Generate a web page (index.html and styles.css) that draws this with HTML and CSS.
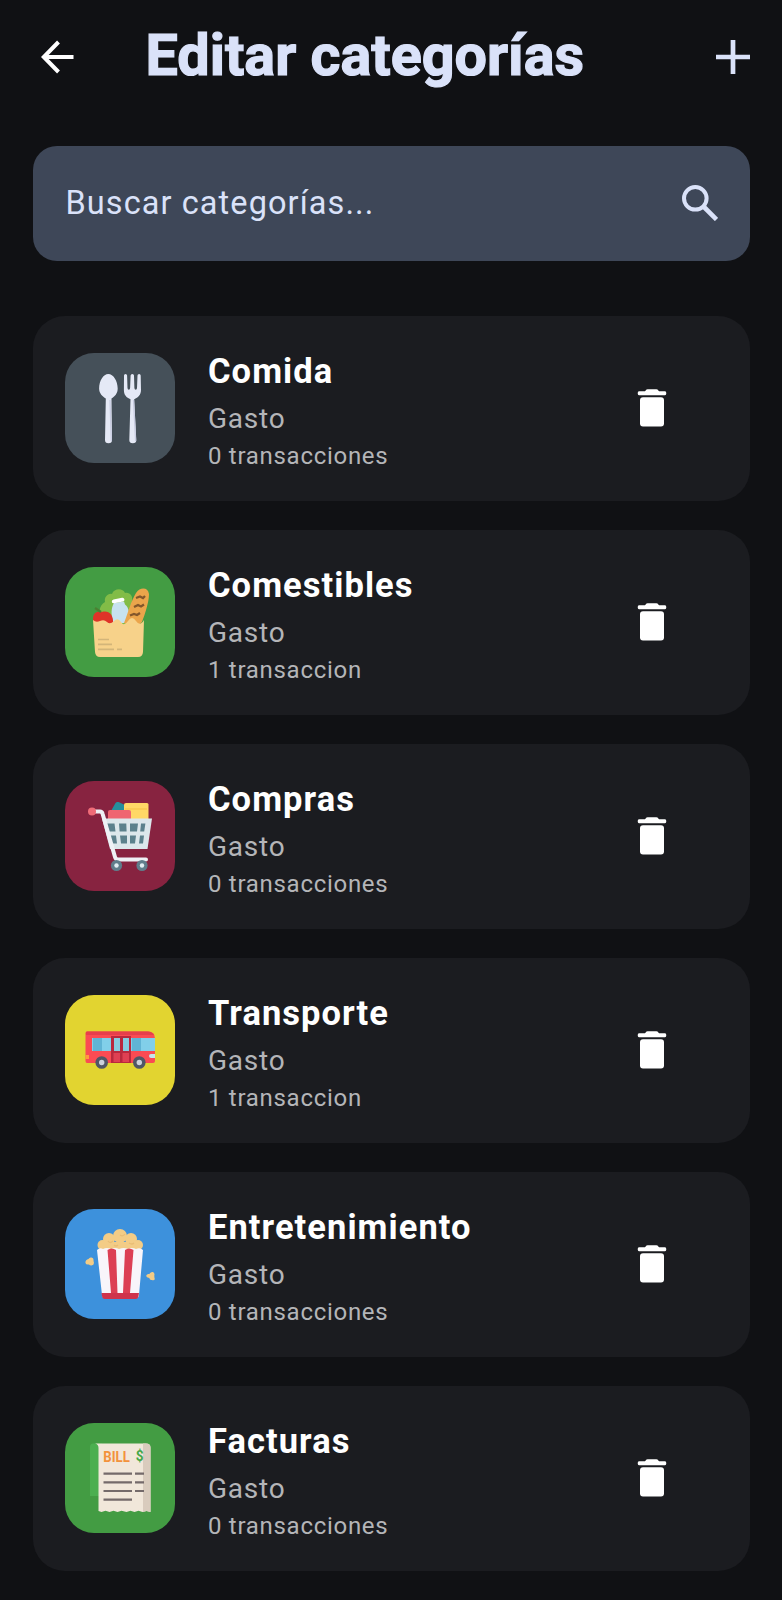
FILE: index.html
```html
<!DOCTYPE html>
<html lang="es">
<head>
<meta charset="utf-8">
<title>Editar categorías</title>
<link rel="stylesheet" href="styles.css">
</head>
<body>
<svg width="0" height="0" class="defs">
  <symbol id="trash" viewBox="0 0 30 38"><path fill="#fff" d="M2 2.300H8L9.500.6Q10 .2 10.700.2h8.600q.7 0 1.200.4L22 2.300h6q1.300 0 1.300 2t-1.300 2H2q-1.300 0-1.300-2t1.300-2ZM6 8.300H24q3 0 3 3V34.500q0 3-3 3H6q-3 0-3-3V11.300q0-3 3-3Z"/></symbol>
</svg>
<header class="topbar">
  <svg class="back" viewBox="0 0 34 34"><path d="M32.500 17H3M17.500 2 2.800 17 17.500 32" fill="none" stroke="#fff" stroke-width="4"/></svg>
  <h1 class="title">Editar categorías</h1>
  <svg class="add" viewBox="0 0 34 34"><path d="M17 0V34M0 17H34" stroke="#dae2f9" stroke-width="4.700"/></svg>
</header>
<main class="content">
  <div class="search">
    <span class="placeholder">Buscar categorías...</span>
    <svg class="lens" viewBox="0 0 36 36"><circle cx="13.300" cy="13.300" r="11.300" fill="none" stroke="#dae2f9" stroke-width="4"/><path d="m21.500 21.500 13 13" stroke="#dae2f9" stroke-width="4.600"/></svg>
  </div>
  <ul class="list">
    <li class="card">
      <svg class="tile slate" viewBox="0 0 110 110">
        <g fill="#e5e9f6"><path d="M43.300 21c5 0 9.400 7 9.400 14.500 0 5-3 8-6.200 10L47 87q0 3.300-3.500 3.300T40 87l.800-41.500c-3.200-2-6.700-5-6.700-10C34.100 28 38.300 21 43.300 21Z"/><path d="M60.500 21q1.500 0 1.600 1.600L62.500 35q.1 1.800 1.300 1.800t1.300-1.800l.5-12.400Q65.700 21 67.300 21t1.700 1.600l.4 12.400q.1 1.800 1.300 1.800T72 35l.5-12.400Q72.600 21 74.100 21t1.600 1.600L76 37c0 5-3 7.500-6.800 9.300L71.300 87q0 3.300-3.500 3.300T64.300 87l1.200-40.700c-4-1.800-6.700-4.300-6.600-9.300l.1-14.400Q59 21 60.500 21Z"/></g>
        <path d="M45 47 46.300 88M68.500 47 70.600 88" stroke="#c8cce1" stroke-width="1.300"/>
      </svg>
      <div class="info"><h2 class="name">Comida</h2><p class="kind">Gasto</p><p class="count">0 transacciones</p></div>
      <svg class="trash"><use href="#trash"/></svg>
    </li>
    <li class="card">
      <svg class="tile green" viewBox="0 0 110 110">
        <path d="M36 55c-3-8-2-17 4-20-1-5 3-9 7-8 2-6 11-6 13-1 5-1 8 3 7 8 4 3 4 9 1 14l-6 10Z" fill="#82bc47"/>
        <path d="M49 36 59 34.500l1 3c4 3 5 9 3 18.500H48c-2-9-2-15 1-20Z" fill="#c7e2ef"/><path d="m48.500 32.500 8.500-1.700q2-.3 2.400 1.500t-1.400 2.300l-9 1.700q-1.800.2-2.200-1.400t1.700-2.400Z" fill="#fff"/>
        <path d="M59 56c4-10 7-22 12-30 4-6 12-6 13 1 0 8-4 20-7 28l-4 4Z" fill="#eba54b"/>
        <path d="m71 31 4-1.500 3 1.500 2-2m-11 11 4-2 3 1.500 3-2m-14 11 4-1.500 3 1 3-2" fill="none" stroke="#83572b" stroke-width="2.300"/>
        <path d="M29 57c-3-8 1-14 8-12 6-2 12 2 11 12Z" fill="#df3328"/><path d="m36 45-6-4" stroke="#4c8032" stroke-width="2.300"/>
        <path d="M28 53q3 3 7 1t7 1 7-1 7 1 7-1 8 0 8-1L78 85q-.3 5-5 5H35q-4.500 0-5-5Z" fill="#f7d28a"/>
        <path d="M33 72.500H44M33 77.300H47M33 82.300H49M52 82.300h5" stroke="#d3b579" stroke-width="1.700"/>
      </svg>
      <div class="info"><h2 class="name">Comestibles</h2><p class="kind">Gasto</p><p class="count">1 transaccion</p></div>
      <svg class="trash"><use href="#trash"/></svg>
    </li>
    <li class="card">
      <svg class="tile wine" viewBox="0 0 110 110">
        <path d="M46 30 50.500 22q1-1.500 3-1L60 24v10H46Z" fill="#258e9c"/><path d="M61 22H82q1.500 0 1.500 1.500V40H59V24q0-2 2-2Z" fill="#ffd866"/><path d="M60 28h22" stroke="#f8ca50" stroke-width="1.300"/><path d="M45 29H64q2 0 2 2v8H43V31q0-2 2-2Z" fill="#ef6571"/>
        <path fill="#dce7eb" d="M37 37.500H87L82.500 68H45Z"/>
        <path fill="#5c818c" d="m42 42.500 1.500 8h7l-1-8Zm12 0 .6 8h7l-.3-8Zm11 0v8h7l1-8Zm11 0-.8 8h4l1.200-8ZM45 54.500l2 8h5l-1-8Zm10 0 1 8h6v-8Zm10 0v8h5l1-8Zm10 0-1 8h4l1-8Z"/>
        <path d="M29 30.500h6q2 0 2.500 2L50 76q.7 2.500 3 2.500H81" fill="none" stroke="#eef1f5" stroke-width="4" stroke-linecap="round" stroke-linejoin="round"/>
        <circle cx="27" cy="30.500" r="4" fill="#f06c78"/>
        <circle cx="51.500" cy="84.500" r="5.600" fill="#607d8b"/><circle cx="51.500" cy="84.500" r="2.200" fill="#e2edf2"/><circle cx="77" cy="84.500" r="5.600" fill="#607d8b"/><circle cx="77" cy="84.500" r="2.200" fill="#e2edf2"/>
      </svg>
      <div class="info"><h2 class="name">Compras</h2><p class="kind">Gasto</p><p class="count">0 transacciones</p></div>
      <svg class="trash"><use href="#trash"/></svg>
    </li>
    <li class="card">
      <svg class="tile yellow" viewBox="0 0 110 110">
        <path d="M22 36.500H83q7 0 7 7V66q0 2-2 2H22q-1.500 0-1.500-2V38q0-1.500 1.500-1.500Z" fill="#fa4b53"/>
        <path d="M22 36.500H83q4 0 6 3.500H21q-.5-3.500 1-3.500Z" fill="#e63f4b"/>
        <path d="M27 43H47V56H27ZM66 43H90V56H66Z" fill="#81cfe9"/><path d="M28 43h9V56H28ZM67 43h9V56H67Z" fill="#60b4d5"/>
        <rect x="46" y="41" width="20" height="27" fill="#b9283d"/><path d="M49 43h6v13h-6ZM58 43h6v13h-6Z" fill="#87ccdf"/><path d="M48.500 58H55v9h-6.500ZM57.500 58H64v9h-6.500Z" fill="#df4053"/>
        <path d="M90 59h-4q-2 0-2 2t2 2h4Z" fill="#c6e5ed"/><path d="M20.500 60H24v4h-3.500Z" fill="#ff9a3d"/>
        <circle cx="36.700" cy="67.500" r="6.300" fill="#505766"/><circle cx="36.700" cy="67.500" r="2.700" fill="#ccd2db"/><circle cx="74.300" cy="67.500" r="6.300" fill="#505766"/><circle cx="74.300" cy="67.500" r="2.700" fill="#ccd2db"/>
      </svg>
      <div class="info"><h2 class="name">Transporte</h2><p class="kind">Gasto</p><p class="count">1 transaccion</p></div>
      <svg class="trash"><use href="#trash"/></svg>
    </li>
    <li class="card">
      <svg class="tile blue" viewBox="0 0 110 110">
        <g fill="#f3cc86"><circle cx="37.500" cy="36" r="5"/><circle cx="44" cy="30" r="6"/><circle cx="55" cy="27" r="7"/><circle cx="66" cy="30" r="6"/><circle cx="73" cy="36" r="5"/><path d="M35 33H75v8H35Z"/><path d="M23.500 50q1-2 3-1.500 2.500.5 2 3.500 1.500 4-2 4.500-2 0-2.500-1-3 .5-3.500-1.500-.5-3 3-4ZM87 63q2.500-.5 2.500 2.500-.5 2 .3 4.500-.5 2-3 1-2 .5-2.500-2-3.500-.5-3-2.500.5-2 3-1.500 1-1.500 2.700-2Z"/></g>
        <path d="M43 32q2 3 5 0m7-6q3 2 5-1m4 9q3 2 5 0m-20 2q2 2 4 0" fill="none" stroke="#e9bd76" stroke-width="1.300"/>
        <path d="M32 41q3-3 6-1 4-2 8 0 4-2 8 0 5-2 9 0 4-2 8 0 4-2 7 1L74 86q0 3-3 3H40q-3 0-3-3Z" fill="#f8f5fa"/>
        <path d="M42.500 41q4-3 8.500 0l1.500 43H46ZM60 41q4-3 8.500 0L65 84h-7Z" fill="#dc3f54"/>
        <path d="m36.500 84 .5 3q.3 3 3 3H70.500q2.700 0 3-3l.5-3Z" fill="#cf334c"/>
      </svg>
      <div class="info"><h2 class="name">Entretenimiento</h2><p class="kind">Gasto</p><p class="count">0 transacciones</p></div>
      <svg class="trash"><use href="#trash"/></svg>
    </li>
    <li class="card">
      <svg class="tile green" viewBox="0 0 110 110">
        <path d="M28 20.500H37V73H25V24q0-3.500 3-3.500Z" fill="#4caf50"/>
        <path d="M31 20.500H81q4.500 0 4.500 4V89l-4-1-4 1-4-1.200-4 1.200-4-1.200-4 1.200-5-1.200-4 1.200-4-1.200-4 1.200-4-1.200-4 1.200-3-1V25q0-4-3.500-4.500Z" fill="#f1e7da"/>
        <path d="M78 20.500h3q4.500 0 4.500 4V89l-4-1-3.500 1Z" fill="#d9cbbd"/>
        <path d="M38.500 50.700H67M70 50.700h9M38.500 59.400H67M70 59.400h9M38.500 68H67M70 68h9M38.500 76.700H67" stroke="#746a6a" stroke-width="2.200"/>
        <text class="bill" x="38.300" y="38.700" textLength="26.500" lengthAdjust="spacingAndGlyphs" fill="#f3923c">BILL</text><text class="bill dollar" x="70.800" y="38" textLength="7.800" lengthAdjust="spacingAndGlyphs" fill="#45a749">$</text>
      </svg>
      <div class="info"><h2 class="name">Facturas</h2><p class="kind">Gasto</p><p class="count">0 transacciones</p></div>
      <svg class="trash"><use href="#trash"/></svg>
    </li>
  </ul>
</main>
</body>
</html>
```
FILE: styles.css
```css
* { box-sizing: border-box; margin: 0; padding: 0; }
body { background: #101114; color: #fff; font-family: Roboto, sans-serif; height: 1600px; overflow: hidden; }
.defs { display: block; }
.topbar { height: 146px; padding: 0 32px 32.500px 41px; display: flex; align-items: center; }
.back { width: 34px; height: 34px; flex: none; }
.title { flex: 1; margin: -1px 0 0 70.500px; font-size: 57.500px; line-height: 68px; font-weight: 700; -webkit-text-stroke: 1.2px #dae2f9; letter-spacing: 0; color: #dae2f9; white-space: nowrap; }
.add { width: 34px; height: 34px; flex: none; }
.content { padding: 0 32.500px; }
.search { height: 114.500px; border-radius: 24px; background: #3e4758; display: flex; align-items: center; justify-content: space-between; padding: 0 32px 0 33px; }
.placeholder { color: #dae2f9; font-size: 32.500px; letter-spacing: 1.080px; margin-bottom: 1px; }
.lens { width: 36px; height: 36px; margin-bottom: 0.500px; }
.list { list-style: none; margin-top: 55.500px; display: flex; flex-direction: column; gap: 29px; }
.card { height: 185px; border-radius: 32px; background: #1b1c20; display: flex; align-items: center; padding: 0 83px 1px 32.500px; }
.tile { width: 110px; height: 110px; border-radius: 29px; flex: none; }
.slate { background: #455059; }
.green { background: #439c43; }
.wine { background: #872340; }
.yellow { background: #e2d430; }
.blue { background: #3d91dc; }
.info { flex: 1; margin: 1px 0 0 33px; white-space: nowrap; }
.name { font-size: 34.500px; line-height: 48px; font-weight: 700; letter-spacing: 1.050px; }
.kind { font-size: 28px; line-height: 47px; letter-spacing: 0.750px; color: #b4b5b8; }
.count { font-size: 24px; line-height: 29px; letter-spacing: 0.710px; color: #b4b5b8; }
.trash { width: 30px; height: 38px; flex: none; margin-top: 0.500px; }
.bill { font: 700 15.500px Roboto, sans-serif; }
.dollar { font-size: 14px; }
```
